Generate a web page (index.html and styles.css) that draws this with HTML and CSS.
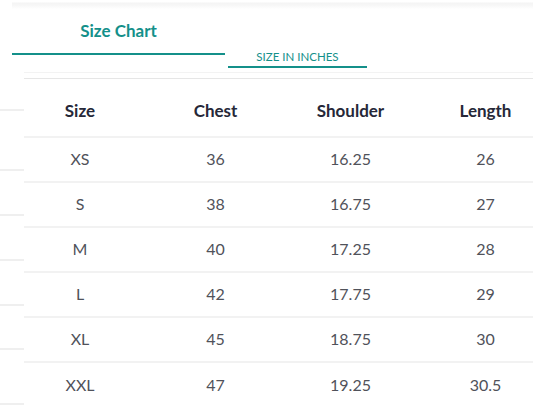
FILE: index.html
```html
<!DOCTYPE html>
<html>
<head>
<meta charset="utf-8">
<link rel="stylesheet" href="styles.css">
</head>
<body>
<div class="page">
  <div class="topbar"></div>
  <div class="tabs">
    <div class="tab tab-main">Size Chart</div>
    <div class="tab tab-sub">SIZE IN INCHES</div>
  </div>
  <div class="rule-faint"></div>
  <div class="body">
    <div class="strip">
      <div class="sl" style="height:33px"></div>
      <div class="sl" style="height:60px"></div>
      <div class="sl" style="height:45px"></div>
      <div class="sl" style="height:45px"></div>
      <div class="sl" style="height:45px"></div>
      <div class="sl" style="height:44px"></div>
      <div class="sl" style="height:55px"></div>
    </div>
    <div class="table">
      <div class="row head">
        <div class="c first">Size</div><div class="c">Chest</div><div class="c">Shoulder</div><div class="c">Length</div>
      </div>
      <div class="row"><div class="c first">XS</div><div class="c">36</div><div class="c">16.25</div><div class="c">26</div></div>
      <div class="row"><div class="c first">S</div><div class="c">38</div><div class="c">16.75</div><div class="c">27</div></div>
      <div class="row"><div class="c first">M</div><div class="c">40</div><div class="c">17.25</div><div class="c">28</div></div>
      <div class="row"><div class="c first">L</div><div class="c">42</div><div class="c">17.75</div><div class="c">29</div></div>
      <div class="row"><div class="c first">XL</div><div class="c">45</div><div class="c">18.75</div><div class="c">30</div></div>
      <div class="row last"><div class="c first">XXL</div><div class="c">47</div><div class="c">19.25</div><div class="c">30.5</div></div>
    </div>
  </div>
</div>
</body>
</html>
```
FILE: styles.css
```css
html, body {
  margin: 0;
  padding: 0;
  background: #fff;
  overflow: hidden;
}
body {
  width: 533px;
  height: 406px;
  font-family: "Lato", "Source Sans Pro", sans-serif;
}
.page {
  width: 533px;
  height: 406px;
  overflow: hidden;
}
.topbar {
  height: 9px;
  margin-left: 12px;
  background: linear-gradient(#fff 0px, #fff 2px, #f4f4f4 3px, #f8f8f8 6px, #fff 9px);
}
.tabs {
  display: flex;
  align-items: flex-start;
  margin-left: 12px;
  gap: 3px;
  height: 63px;
}
.tab {
  color: #14908a;
  text-align: center;
}
.tab-main {
  width: 213px;
  height: 44px;
  border-bottom: 2px solid #14908a;
  font-size: 17px;
  font-weight: 700;
  line-height: 44px;
}
.tab-sub {
  width: 139px;
  margin-top: 41px;
  height: 16px;
  border-bottom: 2px solid #14908a;
  font-size: 11.5px;
  line-height: 14px;
}
.rule-faint {
  margin-left: 24px;
  height: 5px;
  border-top: 1px solid #f3f3f3;
}
.body {
  display: flex;
}
.strip {
  width: 24px;
  flex: none;
  display: flex;
  flex-direction: column;
}
.sl {
  box-sizing: border-box;
  border-bottom: 2px solid #efefef;
  flex: none;
}
.table {
  flex: none;
  width: 529px;
  border-top: 1px solid #e6e6e6;
}
.row {
  display: grid;
  grid-template-columns: 124px 135px 135px 135px;
  height: 45px;
  box-sizing: border-box;
  border-bottom: 2px solid #f2f2f2;
  align-items: center;
  color: #50525a;
  font-size: 16px;
  padding-bottom: 3px;
}
.row.head {
  height: 59px;
  color: #262838;
  font-weight: 700;
  font-size: 17px;
  padding-bottom: 0;
  padding-top: 6px;
}
.row.last {
  border-bottom: none;
}
.c {
  text-align: center;
}
.c.first {
  padding-right: 12px;
}
```
